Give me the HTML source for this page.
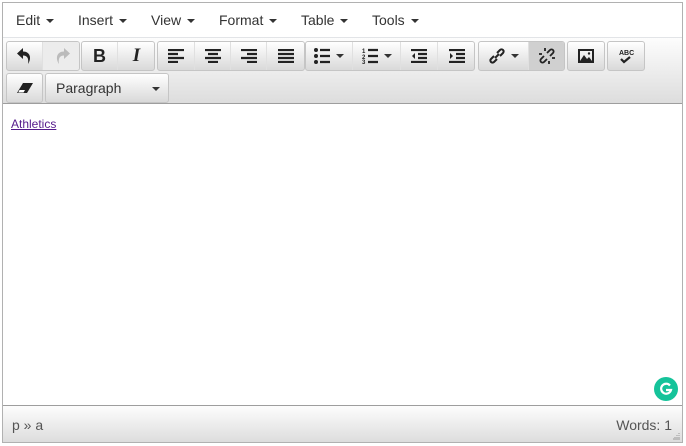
<!DOCTYPE html>
<html><head><meta charset="utf-8"><style>
*{box-sizing:border-box;margin:0;padding:0}
body{width:686px;height:446px;background:#fff;font-family:"Liberation Sans",Arial,sans-serif;position:relative;overflow:hidden}
.wrap{position:absolute;left:2px;top:2px;width:681px;height:441px;border:1px solid #b1b1b1;background:#fff}
.menubar{position:absolute;left:0;top:0;width:679px;height:35px;background:#fff;border-bottom:1px solid #e2e4e7}
.mi{position:absolute;top:9px;font-size:14px;color:#333}
.mi:after{content:"";display:inline-block;margin-left:6px;vertical-align:middle;border-left:4px solid transparent;border-right:4px solid transparent;border-top:4px solid #333}
.tb{position:absolute;left:0;top:35px;width:679px;height:66px;background:linear-gradient(#fdfdfd,#ddd);border-bottom:1px solid #9e9e9e}
.g{position:absolute;height:30px;border:1px solid #c5c5c5;border-radius:3px;background:linear-gradient(#fff,#d9d9d9);overflow:hidden}
.b{position:absolute;top:0;height:28px;display:flex;align-items:center;justify-content:center;border-right:1px solid #e0e0e0}
.b:last-child{border-right:none}
.b svg{display:block}
.car{display:inline-block;margin-left:6px;border-left:4px solid transparent;border-right:4px solid transparent;border-top:4px solid #333}
.content{position:absolute;left:0;top:102px;width:679px;height:301px;background:#fff}
.content a{position:absolute;left:8px;top:12px;font-size:12px;color:#551a8b;text-decoration:underline;font-family:"Liberation Sans",Arial,sans-serif}
.foot{position:absolute;left:0;top:402px;width:679px;height:37px;border-top:1px solid #9e9e9e;background:linear-gradient(#fdfdfd,#ddd);font-size:14px;color:#555}
</style></head><body>
<div class="wrap">
<div class="menubar">
<span class="mi" style="left:13px">Edit</span>
<span class="mi" style="left:75px">Insert</span>
<span class="mi" style="left:148px">View</span>
<span class="mi" style="left:216px">Format</span>
<span class="mi" style="left:298px">Table</span>
<span class="mi" style="left:369px">Tools</span>
</div>
<div class="tb">
<div class="g" style="left:3px;top:3px;width:74px">
 <div class="b" style="left:0;width:36px"><svg width="16" height="18" viewBox="0 0 16 18"><path d="M6 1 L0 6.5 L6 12 V8.5 C10 8.5 12 11 11 17 C15 11 13 4.5 6 4.5 Z" fill="#222"/></svg></div>
 <div class="b" style="left:36px;width:37px;background:#ececec"><svg width="16" height="18" viewBox="0 0 16 18"><path d="M10 1 L16 6.5 L10 12 V8.5 C6 8.5 4 11 5 17 C1 11 3 4.5 10 4.5 Z" fill="#bbb"/></svg></div>
</div>
<div class="g" style="left:78px;top:3px;width:74px">
 <div class="b" style="left:0;width:36px;font:bold 18px 'Liberation Sans';color:#222">B</div>
 <div class="b" style="left:36px;width:37px;font:italic bold 19px 'Liberation Serif';color:#222">I</div>
</div>
<div class="g" style="left:154px;top:3px;width:148px">
 <div class="b" style="left:0;width:37px"><svg width="16" height="14"><path d="M0 1h16M0 5h10M0 9h16M0 13h10" stroke="#222" stroke-width="2.2"/></svg></div>
 <div class="b" style="left:37px;width:36px"><svg width="16" height="14"><path d="M0 1h16M3 5h10M0 9h16M3 13h10" stroke="#222" stroke-width="2.2"/></svg></div>
 <div class="b" style="left:73px;width:36px"><svg width="16" height="14"><path d="M0 1h16M6 5h10M0 9h16M6 13h10" stroke="#222" stroke-width="2.2"/></svg></div>
 <div class="b" style="left:109px;width:37px"><svg width="16" height="14"><path d="M0 1h16M0 5h16M0 9h16M0 13h16" stroke="#222" stroke-width="2.2"/></svg></div>
</div>
<div class="g" style="left:302px;top:3px;width:170px">
 <div class="b" style="left:0;width:47px"><svg width="16" height="16"><circle cx="2" cy="2" r="2" fill="#222"/><circle cx="2" cy="8" r="2" fill="#222"/><circle cx="2" cy="14" r="2" fill="#222"/><path d="M6 2h10M6 8h10M6 14h10" stroke="#222" stroke-width="2.2"/></svg><span class="car"></span></div>
 <div class="b" style="left:47px;width:48px"><svg width="16" height="16"><text x="0" y="5" font-size="6" font-weight="bold" fill="#222">1</text><text x="0" y="11" font-size="6" font-weight="bold" fill="#222">2</text><text x="0" y="16" font-size="6" font-weight="bold" fill="#222">3</text><path d="M6 2h10M6 8h10M6 14h10" stroke="#222" stroke-width="2.2"/></svg><span class="car"></span></div>
 <div class="b" style="left:95px;width:37px"><svg width="16" height="14"><path d="M0 1h16M7 5h9M7 9h9M0 13h16" stroke="#222" stroke-width="2.2"/><path d="M4 4L1 7L4 10Z" fill="#222"/></svg></div>
 <div class="b" style="left:132px;width:37px"><svg width="16" height="14"><path d="M0 1h16M7 5h9M7 9h9M0 13h16" stroke="#222" stroke-width="2.2"/><path d="M1 4L4 7L1 10Z" fill="#222"/></svg></div>
</div>
<div class="g" style="left:475px;top:3px;width:87px">
 <div class="b" style="left:0;width:50px"><svg width="16" height="16"><path d="M6 10l4-4M5 8l-3 3a2 2 0 0 0 3 3l3-3M11 8l3-3a2 2 0 0 0-3-3l-3 3" stroke="#222" stroke-width="2" fill="none"/></svg><span class="car"></span></div>
 <div class="b" style="left:50px;width:36px;background:#d0d0d0"><svg width="16" height="16"><path d="M5 8l-3 3a2 2 0 0 0 3 3l3-3M11 8l3-3a2 2 0 0 0-3-3l-3 3M6 0v3M0 6h3M10 16v-3M16 10h-3" stroke="#222" stroke-width="1.8" fill="none"/></svg></div>
</div>
<div class="g" style="left:564px;top:3px;width:38px">
 <div class="b" style="left:0;width:36px"><svg width="16" height="14"><rect x="1" y="1" width="14" height="12" fill="none" stroke="#222" stroke-width="2"/><path d="M2 12L6 6L9 10L11 8L14 12Z" fill="#222"/><circle cx="11" cy="4.5" r="1.2" fill="#222"/></svg></div>
</div>
<div class="g" style="left:604px;top:3px;width:38px">
 <div class="b" style="left:0;width:36px"><svg width="16" height="16"><text x="1" y="7" font-size="7" font-weight="bold" fill="#222" font-family="Liberation Sans">ABC</text><path d="M3 11l3 3l6-5" stroke="#222" stroke-width="2.2" fill="none"/></svg></div>
</div>
<div class="g" style="left:3px;top:35px;width:37px">
 <div class="b" style="left:0;width:35px"><svg width="16" height="12"><path d="M6 1h10L10 11H0Z" fill="#222"/><path d="M2.5 8h5.5L6.5 10.5H1.2Z" fill="#fff"/></svg></div>
</div>
<div class="g" style="left:42px;top:35px;width:124px">
 <div class="b" style="left:0;width:122px;justify-content:flex-start;padding-left:10px;font-size:14px;color:#333">Paragraph<span class="car" style="position:absolute;left:106px;top:13px;margin:0"></span></div>
</div>
</div>
<div class="content"><a>Athletics</a>
<svg style="position:absolute;left:651px;top:272px" width="24" height="24"><circle cx="12" cy="12" r="12" fill="#15c39a"/><path d="M16 8.5A5 5 0 1 0 17 13h-5" stroke="#fff" stroke-width="2.2" fill="none"/></svg>
</div>
<div class="foot"><span style="position:absolute;left:9px;top:11px">p » a</span><span style="position:absolute;right:10px;top:11px">Words: 1</span>
<svg style="position:absolute;right:2px;bottom:2px" width="8" height="8"><path d="M7 1v1M5 3v1M7 3v1M3 5v1M5 5v1M7 5v1M1 7h7" stroke="#999" stroke-width="1"/></svg></div>
</div>
</body></html>
